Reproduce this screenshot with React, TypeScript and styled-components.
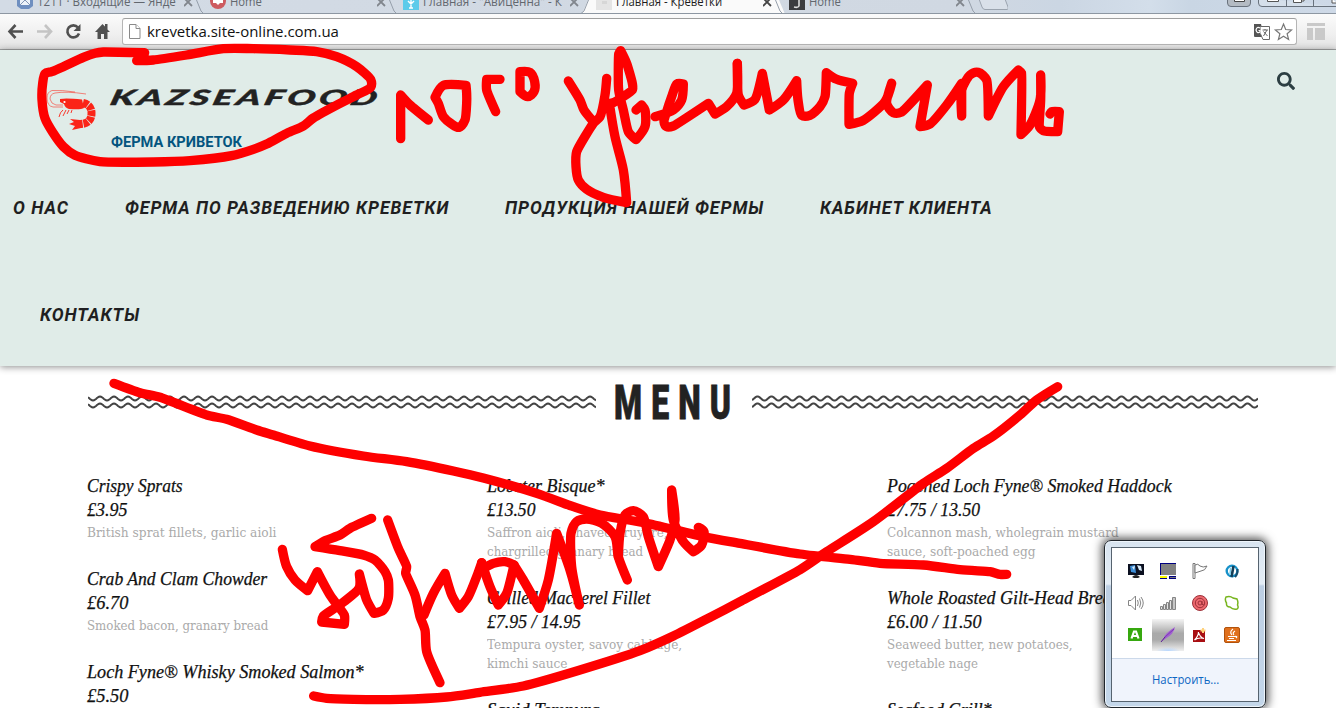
import React, { useLayoutEffect, useRef, useState } from "react";
import styled, { createGlobalStyle, css } from "styled-components";
import { FaSearch } from "react-icons/fa";

const Global = createGlobalStyle`
  * { box-sizing: border-box; }
  body { margin: 0; background: #fff; overflow: hidden; }
`;

const Screen = styled.div`
  position: relative;
  width: 1336px;
  height: 708px;
  overflow: hidden;
  background: #fff;
  display: flex;
  flex-direction: column;
  font-family: "Open Sans", sans-serif;
`;

/* ---------- text stretched to a known width ---------- */

const FitBox = styled.span<{ $w: number }>`
  display: block;
  flex: none;
  width: ${(p) => p.$w}px;
  white-space: nowrap;
`;
const FitInner = styled.span`
  display: inline-block;
  transform-origin: 0 50%;
`;

function Fit({ w, children }: { w: number; children: string }) {
  const ref = useRef<HTMLSpanElement>(null);
  const [scale, setScale] = useState(1);
  useLayoutEffect(() => {
    if (ref.current && ref.current.offsetWidth) setScale(w / ref.current.offsetWidth);
  }, [w, children]);
  return (
    <FitBox $w={w}>
      <FitInner ref={ref} style={{ transform: `scaleX(${scale})` }}>
        {children}
      </FitInner>
    </FitBox>
  );
}

/* ---------- browser chrome ---------- */

const TabStrip = styled.div`
  position: relative;
  flex: none;
  height: 14px;
  padding-left: 3px;
  display: flex;
  overflow: hidden;
  background: linear-gradient(90deg, #d3dbe5 0, #d0d8e2 960px, #cbd6e3 1060px, #d3deea 1150px, #c9d6e4 1190px, #ced9e7 100%);
  border-bottom: 1px solid #8d97a2;
`;
const Tab = styled.div<{ $active?: boolean }>`
  position: relative;
  flex: none;
  width: 193px;
  height: 14px;
  padding-left: 14px;
  display: flex;
  align-items: flex-start;
  font-size: 12px;
  line-height: 16px;
  color: ${(p) => (p.$active ? "#1c1c1c" : "#62676e")};
  ${(p) =>
    p.$active &&
    css`
      z-index: 1;
      &::before {
        content: "";
        position: absolute;
        left: 0;
        right: -10px;
        top: 0;
        height: 14px;
        background: #fafafa;
        clip-path: polygon(6px 0, 197px 0, 203px 100%, 0 100%);
      }
    `}
`;
const TabIcon = styled.svg`
  position: relative;
  flex: none;
  width: 16px;
  height: 10px;
  margin-right: 4px;
`;
const TabLabel = styled.div`
  position: relative;
  margin-top: -6px;
  width: 147px;
`;
const TabClose = styled.svg`
  position: relative;
  width: 9px;
  height: 7px;
`;
const TabEdge = styled.svg`
  position: absolute;
  top: 0;
  right: -9px;
  width: 12px;
  height: 14px;
  z-index: 2;
`;
const NewTab = styled.svg`
  flex: none;
  width: 32px;
  height: 12px;
  margin-left: 8px;
`;
const WindowButtons = styled.svg`
  flex: none;
  width: 109px;
  height: 8px;
  margin-left: auto;
`;

const Toolbar = styled.div`
  flex: none;
  height: 36px;
  display: flex;
  align-items: center;
  background: linear-gradient(#fbfbfb, #efefef 60%, #e2e2e2);
  border-bottom: 1px solid #a3a5a5;
`;
const NavButtons = styled.svg`
  flex: none;
  width: 122px;
  height: 35px;
`;
const AddressBar = styled.div`
  width: 1175px;
  height: 27px;
  padding: 0 3px 0 6px;
  display: flex;
  align-items: center;
  background: #fff;
  border: 1px solid #b5b5b5;
  border-top-color: #9f9f9f;
  border-radius: 3px;
  font-size: 14.5px;
  line-height: 20px;
  color: #111;
`;
const PageGlyph = styled.svg`
  width: 12px;
  height: 15px;
  margin-right: 6px;
`;
const BarActions = styled.svg`
  width: 40px;
  height: 20px;
  margin-left: auto;
`;
const Extension = styled.svg`
  width: 18px;
  height: 18px;
  margin-left: 10px;
`;

/* ---------- site header ---------- */

const Header = styled.header`
  position: relative;
  flex: none;
  height: 316px;
  background: #e0ece8;
  box-shadow: 0 1px 7px rgba(0, 0, 0, 0.45);
  font-family: Roboto, sans-serif;
`;
const BrandRow = styled.div`
  display: flex;
  justify-content: space-between;
  height: 104px;
  padding: 23px 41px 0 46px;
`;
const Brand = styled.div`
  display: flex;
`;
const Shrimp = styled.svg`
  width: 58px;
  height: 60px;
  margin: 8px 7px 0 0;
`;
const BrandText = styled.div`
  display: flex;
  flex-direction: column;
`;
const BrandName = styled.div`
  height: 47px;
  padding-top: 12px;
  font: italic 900 21px/24px Lato, sans-serif;
  letter-spacing: 2px;
  color: #222;
  transform: skewX(-14deg);
  -webkit-text-stroke: 0.4px #222;
`;
const BrandTag = styled.div`
  margin-top: 12px;
  font-size: 15.5px;
  font-weight: 700;
  line-height: 20px;
  color: #04557f;
`;
const SearchIcon = styled(FaSearch)`
  width: 18px;
  height: 18px;
  margin-top: -1px;
  color: #2c3e42;
`;
const NavRow = styled.nav<{ $indent: number }>`
  display: flex;
  gap: 56px;
  height: 107px;
  padding-left: ${(p) => p.$indent}px;
`;
const NavItem = styled.a`
  flex: none;
  line-height: 107px;
  font-size: 18px;
  font-style: italic;
  font-weight: 700;
  letter-spacing: 1px;
  color: #1f1f21;
`;

/* ---------- menu ---------- */

const MenuHead = styled.div`
  flex: none;
  height: 108px;
  padding: 14px 78px 0 88px;
  display: flex;
`;
const Waves = styled.svg`
  flex: none;
  height: 14px;
  margin-top: 15px;
`;
const MenuTitle = styled.h1`
  margin: 0 0 0 18px;
  width: 138px;
  font: 900 49px/46px Roboto, sans-serif;
  letter-spacing: 14px;
  color: #222;
  -webkit-text-stroke: 0.8px #222;
`;
const Columns = styled.div`
  display: flex;
  padding-left: 87px;
`;
const Column = styled.div`
  flex: none;
  width: 400px;
`;
const Dish = styled.article`
  margin-bottom: 26px;
`;
const DishName = styled.div`
  height: 24px;
  font: italic 400 18px/24px "Liberation Serif", serif;
  color: #111;
  -webkit-text-stroke: 0.25px #111;
`;
const DishNote = styled.div`
  position: relative;
  top: 1px;
  height: 19px;
  font: 400 12.5px/19px "DejaVu Serif Condensed", "DejaVu Serif", serif;
  color: #aaa;
`;

/* ---------- tray popup ---------- */

const Tray = styled.div`
  position: absolute;
  left: 1104px;
  top: 540px;
  width: 162px;
  height: 168px;
  padding: 6px;
  background: linear-gradient(#d8e4f0 0, #e4edf5 43px, #bdcfe3 45px, #c4d7ea 100%);
  border: 1px solid #20262c;
  border-radius: 7px;
  box-shadow: 0 0 10px 2px rgba(0, 0, 0, 0.7), inset 0 0 0 1px #eef5fb;
`;
const TrayPanel = styled.div`
  height: 155px;
  display: flex;
  flex-direction: column;
  background: #fff;
  border: 1px solid #56636f;
`;
const TrayGrid = styled.div`
  flex: none;
  height: 111px;
  padding: 7px 9px 0 8px;
  display: grid;
  grid-template-columns: repeat(4, 32px);
  grid-auto-rows: 32px;
  border-bottom: 1px solid #ccd9ea;
`;
const TrayCell = styled.div<{ $selected?: boolean }>`
  display: flex;
  align-items: center;
  justify-content: center;
  ${(p) =>
    p.$selected &&
    css`
      background: radial-gradient(ellipse 12px 4px at 50% 100%, #b7d7ff, transparent),
        linear-gradient(#f4f4f4, #a9a9a9 45%, #aaa 65%, #efefef);
    `}
`;
const TrayFooter = styled.div`
  flex: 1;
  display: flex;
  justify-content: center;
  background: #f0f4fc;
  font-size: 12px;
  line-height: 41px;
  color: #0b66c3;
`;

const Ink = styled.svg`
  position: absolute;
  left: 0;
  top: 0;
  width: 1336px;
  height: 708px;
  fill: none;
  stroke: #fe0000;
  stroke-linecap: round;
  stroke-linejoin: round;
  pointer-events: none;
`;

const wave = (width: number, crest: number, y: number) => {
  let d = "";
  for (let x = 0; x <= width; x += 1) {
    const v = y - 2 * Math.cos(((x - crest) / 14) * Math.PI * 2);
    d += `${x ? "L" : "M"}${x} ${v.toFixed(2)}`;
  }
  return d;
};

function WaveRule({ width, crest }: { width: number; crest: number }) {
  return (
    <Waves width={width} viewBox={`0 0 ${width} 14`} fill="none" stroke="#444" strokeWidth="2">
      <path d={wave(width, crest, 3.5)} />
      <path d={wave(width, crest, 10.5)} />
    </Waves>
  );
}

type Line = [string, number];
type DishData = { name: Line; price?: Line; notes?: Line[] };

const menu: DishData[][] = [
  [
    { name: ["Crispy Sprats", 96], price: ["£3.95", 41], notes: [["British sprat fillets, garlic aioli", 189]] },
    { name: ["Crab And Clam Chowder", 180], price: ["£6.70", 42], notes: [["Smoked bacon, granary bread", 181]] },
    { name: ["Loch Fyne® Whisky Smoked Salmon*", 277], price: ["£5.50", 42] },
  ],
  [
    {
      name: ["Lobster Bisque*", 118],
      price: ["£13.50", 49],
      notes: [["Saffron aioli, shaved gruyere,", 181], ["chargrilled granary bread", 156]],
    },
    {
      name: ["Grilled Mackerel Fillet", 163],
      price: ["£7.95 / 14.95", 94],
      notes: [["Tempura oyster, savoy cabbage,", 195], ["kimchi sauce", 80]],
    },
    { name: ["Squid Tempura", 113] },
  ],
  [
    {
      name: ["Poached Loch Fyne® Smoked Haddock", 285],
      price: ["£7.75 / 13.50", 93],
      notes: [["Colcannon mash, wholegrain mustard", 232], ["sauce, soft-poached egg", 149]],
    },
    {
      name: ["Whole Roasted Gilt-Head Bream", 238],
      price: ["£6.00 / 11.50", 95],
      notes: [["Seaweed butter, new potatoes,", 186], ["vegetable nage", 91]],
    },
    { name: ["Seafood Grill*", 105] },
  ],
];

const tabs = [
  { label: "1211 · Входящие — Янде", w: 139 },
  { label: "Home", w: 32 },
  { label: 'Главная - "Авиценна" - К', w: 139 },
  { label: "Главная - Креветки", w: 106, active: true },
  { label: "Home", w: 32 },
];

const tabIcons = [
  <g key="0"><path d="M0-4H16V6L12 9H4L0 6Z" fill="#6f8fc0" /><path d="M3-4H13V5H3Z" fill="#eef3fa" /><path d="M3 5L8 0L13 5" fill="none" stroke="#8296b5" /></g>,
  <g key="1"><circle cx="8" cy="1" r="8" fill="#cd5b60" /><path d="M3 0H13V3H10L8 5L6 3H3Z" fill="#fff" /></g>,
  <g key="2"><path d="M0 0H16V10H0Z" fill="#5ccbea" /><path d="M8 0V8M5 1L8 4L11 1M6 8H10" fill="none" stroke="#fff" strokeWidth="1.4" /></g>,
  <g key="3"><path d="M0 0H16V10H0Z" fill="#e4e4e4" /><path d="M6 1H11V4H6Z" fill="#d6d6d6" /></g>,
  <g key="4"><path d="M0 0H16V10H0Z" fill="#3b3c3f" /><path d="M10 0V6Q9 8 5 7" fill="none" stroke="#ddd" strokeWidth="1.6" /></g>,
];

const edges = [
  "M3.5 0L8 11L10.5 13.5",
  "M3.5 0L8 11L10.5 13.5",
  "M9.5 0L5 11L2 13.5",
  "M3.5 0L8 11L10.5 13.5",
  "M3.5 0L8 11L10.5 13.5",
];

const trayIcons = [
  <g key="a"><path d="M0 1H16V12H0Z" fill="#0b1020" /><path d="M2 3L7 2L8 10L3 9Z" fill="#3d8fd8" /><path d="M4 4L7 3L6 7ZM9 2L13 3L14 8L11 7Z" fill="#d9ecfa" /><path d="M4 14Q8 10 12 14L10 15H6Z" fill="#222" /></g>,
  <g key="b" shapeRendering="crispEdges"><path d="M0 0H16V12H0Z" fill="#828282" /><path d="M0 0H16V1H1V12H0Z" fill="#000080" /><path d="M0 13H7V15H0Z" fill="#ff0" /><path d="M0 15H7V16H0ZM9 13H16V16H9Z" fill="#000080" /><path d="M10 14H16V15H10Z" fill="#777" /></g>,
  <g key="c" fill="#fff" stroke="#777"><path d="M1 .5H3V15.5H1Z" /><path d="M3 2Q6 0 8 3Q11 5 15 3Q13 8 9 8Q6 9 3 10Z" /></g>,
  <g key="d" fill="none"><circle cx="8" cy="8" r="5.3" stroke="#1791c9" strokeWidth="2.4" /><path d="M9.500 3L7.500 14" stroke="#153f58" strokeWidth="2.600" /><path d="M6.500 5L6 12" stroke="#79cbea" strokeWidth="1.500" /><path d="M11 14Q14 11 13.500 6" stroke="#174d6d" strokeWidth="2" /></g>,
  <g key="e" fill="none" stroke="#858585"><path d="M.5 5.5H3L7.500 1V15L3 10.500H.5Z" /><path d="M9.500 5Q11 8 9.500 11M11.500 3.500Q14 8 11.500 12.500M13 2Q17.500 8 13 14" /></g>,
  <g key="f" fill="#e4e4e4" stroke="#858585"><path d="M.5 11.500H2.500V14.500H.5ZM3.500 9.500H5.500V14.500H3.500ZM6.500 7.500H8.500V14.500H6.500ZM9.500 5.500H11.500V14.500H9.500Z" /><path d="M12.500 2.500H15.500V14.500H12.500Z" fill="#c6c6c6" /></g>,
  <g key="g" fill="none" stroke="#9c3038"><circle cx="8" cy="8" r="7.500" fill="#ee6a70" /><circle cx="8" cy="8" r="4.700" /><circle cx="8" cy="8" r="2" /><path d="M10 6V9Q11 11 12.500 9" /></g>,
  <path key="h" d="M2 2Q6 .5 9 3L13 4Q14.500 7 13.500 10Q15 13 13 14Q9 15 6 12Q2 12 2.500 8Q.5 5 2 2Z" fill="#fff" stroke="#78b51f" strokeWidth="1.500" />,
  <g key="i"><path d="M0 1H14V14H0Z" fill="#36a80f" /><path d="M3.500 11.500L6 4.500H8L10.500 11.500M5 9H9" fill="none" stroke="#fff" strokeWidth="2.200" /></g>,
  <g key="j"><path d="M1 15L4 11Q4 7 15 0Q14 7 5 12Z" fill="#a25fd2" /><path d="M1 15L5 10" stroke="#5b1f92" /><path d="M5 10L14 2" stroke="#7b3bb5" /></g>,
  <g key="k"><path d="M1 3H13V15H1Z" fill="#a80e12" /><path d="M2.500 13Q6.500 9 6.500 5Q7.500 10 12 11.500Q6.500 10 2.500 13Z" fill="none" stroke="#fff" strokeWidth="1.200" /><path d="M11 1V6M8.500 3.500H13.500" stroke="#ffd27d" strokeWidth="2" /></g>,
  <g key="l"><rect x=".5" y=".5" width="15" height="15" rx="1.500" fill="#e0701c" stroke="#b0520d" /><path d="M9 2Q5 5 8 8M11 4Q8 6 10 8M4 9.500H11Q14 9 12 11M5 11.500H10M3 13.500H12" fill="none" stroke="#fff" strokeWidth="1.200" /></g>,
];

/* Marker strokes as point lists, on a grid three times finer than the page. */
const ink: { x: number; y: number; strokes: string[] }[] = [
  {
    x: 20,
    y: 40,
    strokes: [
      "374 38 250 36 225 40 190 52 130 80 95 95 75 101 68 130 66 180 75 235 100 280 130 320 165 346 240 365 400 366 510 362 635 347 700 328 740 312 800 280 850 258 880 234 960 190 1010 165 1052 142 1052 118 1010 80 950 50 890 35 810 30 700 26 610 26 500 45 400 60 350 62 372 45",
    ],
  },
  {
    x: 380,
    y: 40,
    strokes: [
      "62 296 62 165 90 195 145 240",
      "165 172 190 136 258 136 260 160 260 190 255 240 237 262 215 252 190 230 175 190 165 172",
      "360 118 320 118 320 150 347 215",
      "420 155 420 95 450 97 464 125 462 155 443 170 420 155",
      "565 123 600 180 612 210 640 245",
      "680 115 675 165 660 230 640 250 590 335 588 380 595 420 620 448 670 472 740 488 730 390 705 290 688 190 700 188 757 150 757 130 740 70 722 32 716 42 716 150 730 210 745 275 768 299 795 260 795 210 785 195 768 210",
      "825 230 880 210 905 180 910 132 890 132 875 170 860 215 852 245 860 260 880 258 985 190 1005 222 1040 200 1070 160 1072 70",
    ],
  },
  {
    x: 720,
    y: 40,
    strokes: [
      "52 70 55 165 72 195 105 178 127 100 148 210 190 180 230 122 234 180 245 226 270 226 300 200 315 170 319 98 350 118 398 130 388 160 387 253 430 241 495 185 515 130 500 190 520 218 545 216 622 135 600 260 630 252 680 195 725 130 725 228 725 150 750 105 775 97 800 120 805 228 850 140 895 90 905 100 903 284 930 255 960 180 962 105 962 180 958 260 970 272 1013 275 1018 215 995 215 990 222",
    ],
  },
  {
    x: 260,
    y: 480,
    strokes: [
      "67 208 80 260 105 300 143 332 172 275 210 345 253 405 253 433 185 426 190 408 245 370 297 325 298 282 320 360 342 400 370 390 385 355 385 300 375 275 345 240 310 225 240 212 165 200 195 182 240 165 270 145 335 115",
      "383 120 415 205 440 260 437 280 465 345 480 410 495 450 500 515 540 608",
      "492 405 520 340 555 280 575 345 598 385 625 350 650 290 665 248",
    ],
  },
  {
    x: 480,
    y: 470,
    strokes: [
      "5 278 30 350 55 405 80 370 102 285 75 275 40 280 10 296",
      "102 285 130 330 178 415 205 330 230 190 270 300 298 405 275 290 273 190 290 155 320 147 365 160 405 200 415 260 442 330",
      "415 260 420 190 435 135 460 122 490 140 505 200 535 290 570 210 585 150 575 60 580 150 610 215 640 245 665 225 672 185 655 172",
    ],
  },
  {
    x: 0,
    y: 0,
    strokes: [
      "342 1150 420 1178 480 1192 620 1245 680 1258 770 1290 820 1305 930 1338 1090 1368 1220 1385 1360 1413 1450 1434 1610 1480 1720 1520 1800 1545 1940 1570 2120 1612 2220 1630 2400 1662 2550 1678 2640 1690 2770 1695 2880 1709 2970 1715 3000 1723 3020 1723",
      "3173 1160 3110 1200 3060 1245 2980 1308 2920 1345 2840 1405 2770 1450 2620 1565 2480 1655 2400 1709 2220 1805 2130 1852 2020 1908 1920 1952 1740 2010 1570 2058 1440 2077 1340 2091 1200 2098 1060 2098 980 2095 941 2088",
    ],
  },
];

/* Rounds gentle bends and keeps sharp reversals as corners. */
function smooth(list: string) {
  const n = list.split(" ").map(Number);
  const p: number[][] = [];
  for (let i = 0; i < n.length; i += 2) p.push([n[i], n[i + 1]]);
  const tangent = (i: number) => {
    const a = p[i - 1];
    const b = p[i + 1];
    if (!a || !b) return [0, 0];
    const u = [p[i][0] - a[0], p[i][1] - a[1]];
    const v = [b[0] - p[i][0], b[1] - p[i][1]];
    const lu = Math.hypot(u[0], u[1]);
    const lv = Math.hypot(v[0], v[1]);
    const cos = (u[0] * v[0] + u[1] * v[1]) / (lu * lv);
    if (cos < 0.2) return [0, 0];
    const k = Math.min(lu, lv) * 0.3;
    const t = [u[0] / lu + v[0] / lv, u[1] / lu + v[1] / lv];
    const lt = Math.hypot(t[0], t[1]);
    return [(t[0] / lt) * k, (t[1] / lt) * k];
  };
  let d = `M${p[0][0]} ${p[0][1]}`;
  for (let i = 1; i < p.length; i++) {
    const s = tangent(i - 1);
    const e = tangent(i);
    d += `C${p[i - 1][0] + s[0]} ${p[i - 1][1] + s[1]} ${p[i][0] - e[0]} ${p[i][1] - e[1]} ${p[i][0]} ${p[i][1]}`;
  }
  return d;
}

export default function App() {
  return (
    <Screen>
      <Global />
      <TabStrip>
        {tabs.map((t, i) => (
          <Tab key={i} $active={t.active}>
            <TabIcon viewBox="0 0 16 10">{tabIcons[i]}</TabIcon>
            <TabLabel>
              <Fit w={t.w}>{t.label}</Fit>
            </TabLabel>
            <TabClose viewBox="0 0 9 7" stroke={t.active ? "#444" : "#81868d"} strokeWidth="1.8">
              <path d="M0-2L8 6M8-2L0 6" />
            </TabClose>
            <TabEdge viewBox="0 0 12 14" fill="none" stroke="#959eaa">
              <path d={edges[i]} />
            </TabEdge>
          </Tab>
        ))}
        <NewTab viewBox="0 0 32 12" fill="#d9e0e9" stroke="#9ba4af">
          <path d="M3 -1L6 7Q7 9.500 9 9.500H31Q33 9 32 7L29 -1" />
        </NewTab>
        <WindowButtons viewBox="0 0 109 8" fill="#d5dfea" stroke="#69727d">
          <path d="M.5 -2V3Q.5 6.500 4 6.500H20Q23.500 6.500 23.500 3V-2Z" fill="#b4bbc3" />
          <path d="M7.500-1V1.500H17.500V-1" fill="#fff" stroke="#444" />
          <path d="M31.500-2V3Q31.500 6.500 35 6.500H110M59.500-2V6M86.500-2V6" />
          <path d="M40.500-1V1.500H51.500V-1M66.500-1V2.500H74.500V-1M74 1H77V-1M105-1V3H110" fill="#fff" stroke="#555" />
        </WindowButtons>
      </TabStrip>

      <Toolbar>
        <NavButtons viewBox="0 0 122 35" fill="none" strokeWidth="2.600">
          <path d="M23 17.500H10M15.500 11L9.500 17.500L15.500 24" stroke="#505050" />
          <path d="M37 17.500H50M45 11L51 17.500L45 24" stroke="#c4c4c4" />
          <path d="M78 13.500A6 6 0 1 0 79 19.500" stroke="#505050" />
          <path d="M80.500 10V17H73.500Z" fill="#505050" />
          <path d="M95 18L102.500 10L105 12.500V10H107.500V15.500L110 18H107.500V25H104V20H101V25H97.500V18Z" fill="#505050" />
        </NavButtons>
        <AddressBar>
          <PageGlyph viewBox="0 0 12 15" fill="#fff" stroke="#8a8a8a">
            <path d="M.5 .5H7L11 4.500V14.500H.5Z" />
            <path d="M7 .5V4.500H11" />
          </PageGlyph>
          <Fit w={192}>krevetka.site-online.com.ua</Fit>
          <BarActions viewBox="0 0 40 20">
            <path d="M1 2H8L11 15H2Q1 15 1 14Z" fill="#555" />
            <path d="M7.500 4.500H16.500V17.500H10L7.500 12" fill="#fff" stroke="#666" />
            <path d="M7 6Q4 4 3 8Q4 12 7 10V8.500H5.500" fill="none" stroke="#fff" strokeWidth="1.200" />
            <path d="M9.500 8H15M12 7V8M10.500 14L14 8M10.500 9.500L14.500 14" fill="none" stroke="#666" />
            <path d="M30.500 2L32.700 7.500L38.600 7.900L34.100 11.700L35.600 17.500L30.500 14.300L25.400 17.500L26.900 11.700L22.400 7.900L28.300 7.500Z" fill="#fff" stroke="#777" strokeWidth="1.200" />
          </BarActions>
        </AddressBar>
        <Extension viewBox="0 0 18 18" fill="#c9c9c9">
          <path d="M0 0H18V3H0ZM0 5H6V17H0ZM8 5H18V17H8Z" />
        </Extension>
      </Toolbar>

      <Header>
        <BrandRow>
          <Brand>
            <Shrimp viewBox="0 0 58 60" fill="none" stroke="#fb2417">
              <path d="M29 11Q16 9 6 9.500Q1 11 1 17Q1 25 7 26H17M40 13Q20 10 9 12Q4 13 4 18Q5 23 10 24H17" strokeWidth=".9" opacity=".6" />
              <path d="M14 18Q20 17 36 18.500L38 27Q35 29 23 28Q19 27 18 23L14 21Z" fill="#fb2417" stroke="none" />
              <circle cx="18.500" cy="21" r="1.100" fill="#fff" stroke="none" />
              <path d="M37 22Q46 24 45.500 33Q45 43 34 43" strokeWidth="8" strokeDasharray="5.200 .8" />
              <path d="M34 39L24 38L28 41L23 43L29 45L26 49L35 47Z" fill="#fb2417" stroke="none" />
              <path d="M17 29Q14 31 13 36M20 29L17 35M23 29L21 33M26 29L25 32" strokeWidth=".9" />
            </Shrimp>
            <BrandText>
              <BrandName>
                <Fit w={270}>KAZSEAFOOD</Fit>
              </BrandName>
              <BrandTag>
                <Fit w={131}>ФЕРМА КРИВЕТОК</Fit>
              </BrandTag>
            </BrandText>
          </Brand>
          <SearchIcon />
        </BrandRow>
        <NavRow $indent={13}>
          <NavItem><Fit w={56}>О НАС</Fit></NavItem>
          <NavItem><Fit w={324}>ФЕРМА ПО РАЗВЕДЕНИЮ КРЕВЕТКИ</Fit></NavItem>
          <NavItem><Fit w={259}>ПРОДУКЦИЯ НАШЕЙ ФЕРМЫ</Fit></NavItem>
          <NavItem><Fit w={173}>КАБИНЕТ КЛИЕНТА</Fit></NavItem>
        </NavRow>
        <NavRow $indent={40}>
          <NavItem><Fit w={100}>КОНТАКТЫ</Fit></NavItem>
        </NavRow>
      </Header>

      <MenuHead>
        <WaveRule width={508} crest={12} />
        <MenuTitle>
          <Fit w={126}>MENU</Fit>
        </MenuTitle>
        <WaveRule width={506} crest={5.5} />
      </MenuHead>

      <Columns>
        {menu.map((col, i) => (
          <Column key={i}>
            {col.map((dish) => (
              <Dish key={dish.name[0]}>
                <DishName>
                  <Fit w={dish.name[1]}>{dish.name[0]}</Fit>
                </DishName>
                {dish.price && (
                  <DishName>
                    <Fit w={dish.price[1]}>{dish.price[0]}</Fit>
                  </DishName>
                )}
                {dish.notes?.map(([text, w]) => (
                  <DishNote key={text}>
                    <Fit w={w}>{text}</Fit>
                  </DishNote>
                ))}
              </Dish>
            ))}
          </Column>
        ))}
      </Columns>

      <Tray>
        <TrayPanel>
          <TrayGrid>
            {trayIcons.map((icon, i) => (
              <TrayCell key={i} $selected={i === 9}>
                <svg width="16" height="16" viewBox="0 0 16 16">{icon}</svg>
              </TrayCell>
            ))}
          </TrayGrid>
          <TrayFooter>
            <Fit w={67}>Настроить...</Fit>
          </TrayFooter>
        </TrayPanel>
      </Tray>

      <Ink viewBox="0 0 1336 708">
        {ink.map((g, i) => (
          <g key={i} strokeWidth="28" transform={`translate(${g.x} ${g.y}) scale(${1 / 3})`}>
            {g.strokes.map((s, j) => (
              <path key={j} d={smooth(s)} />
            ))}
          </g>
        ))}
      </Ink>
    </Screen>
  );
}
